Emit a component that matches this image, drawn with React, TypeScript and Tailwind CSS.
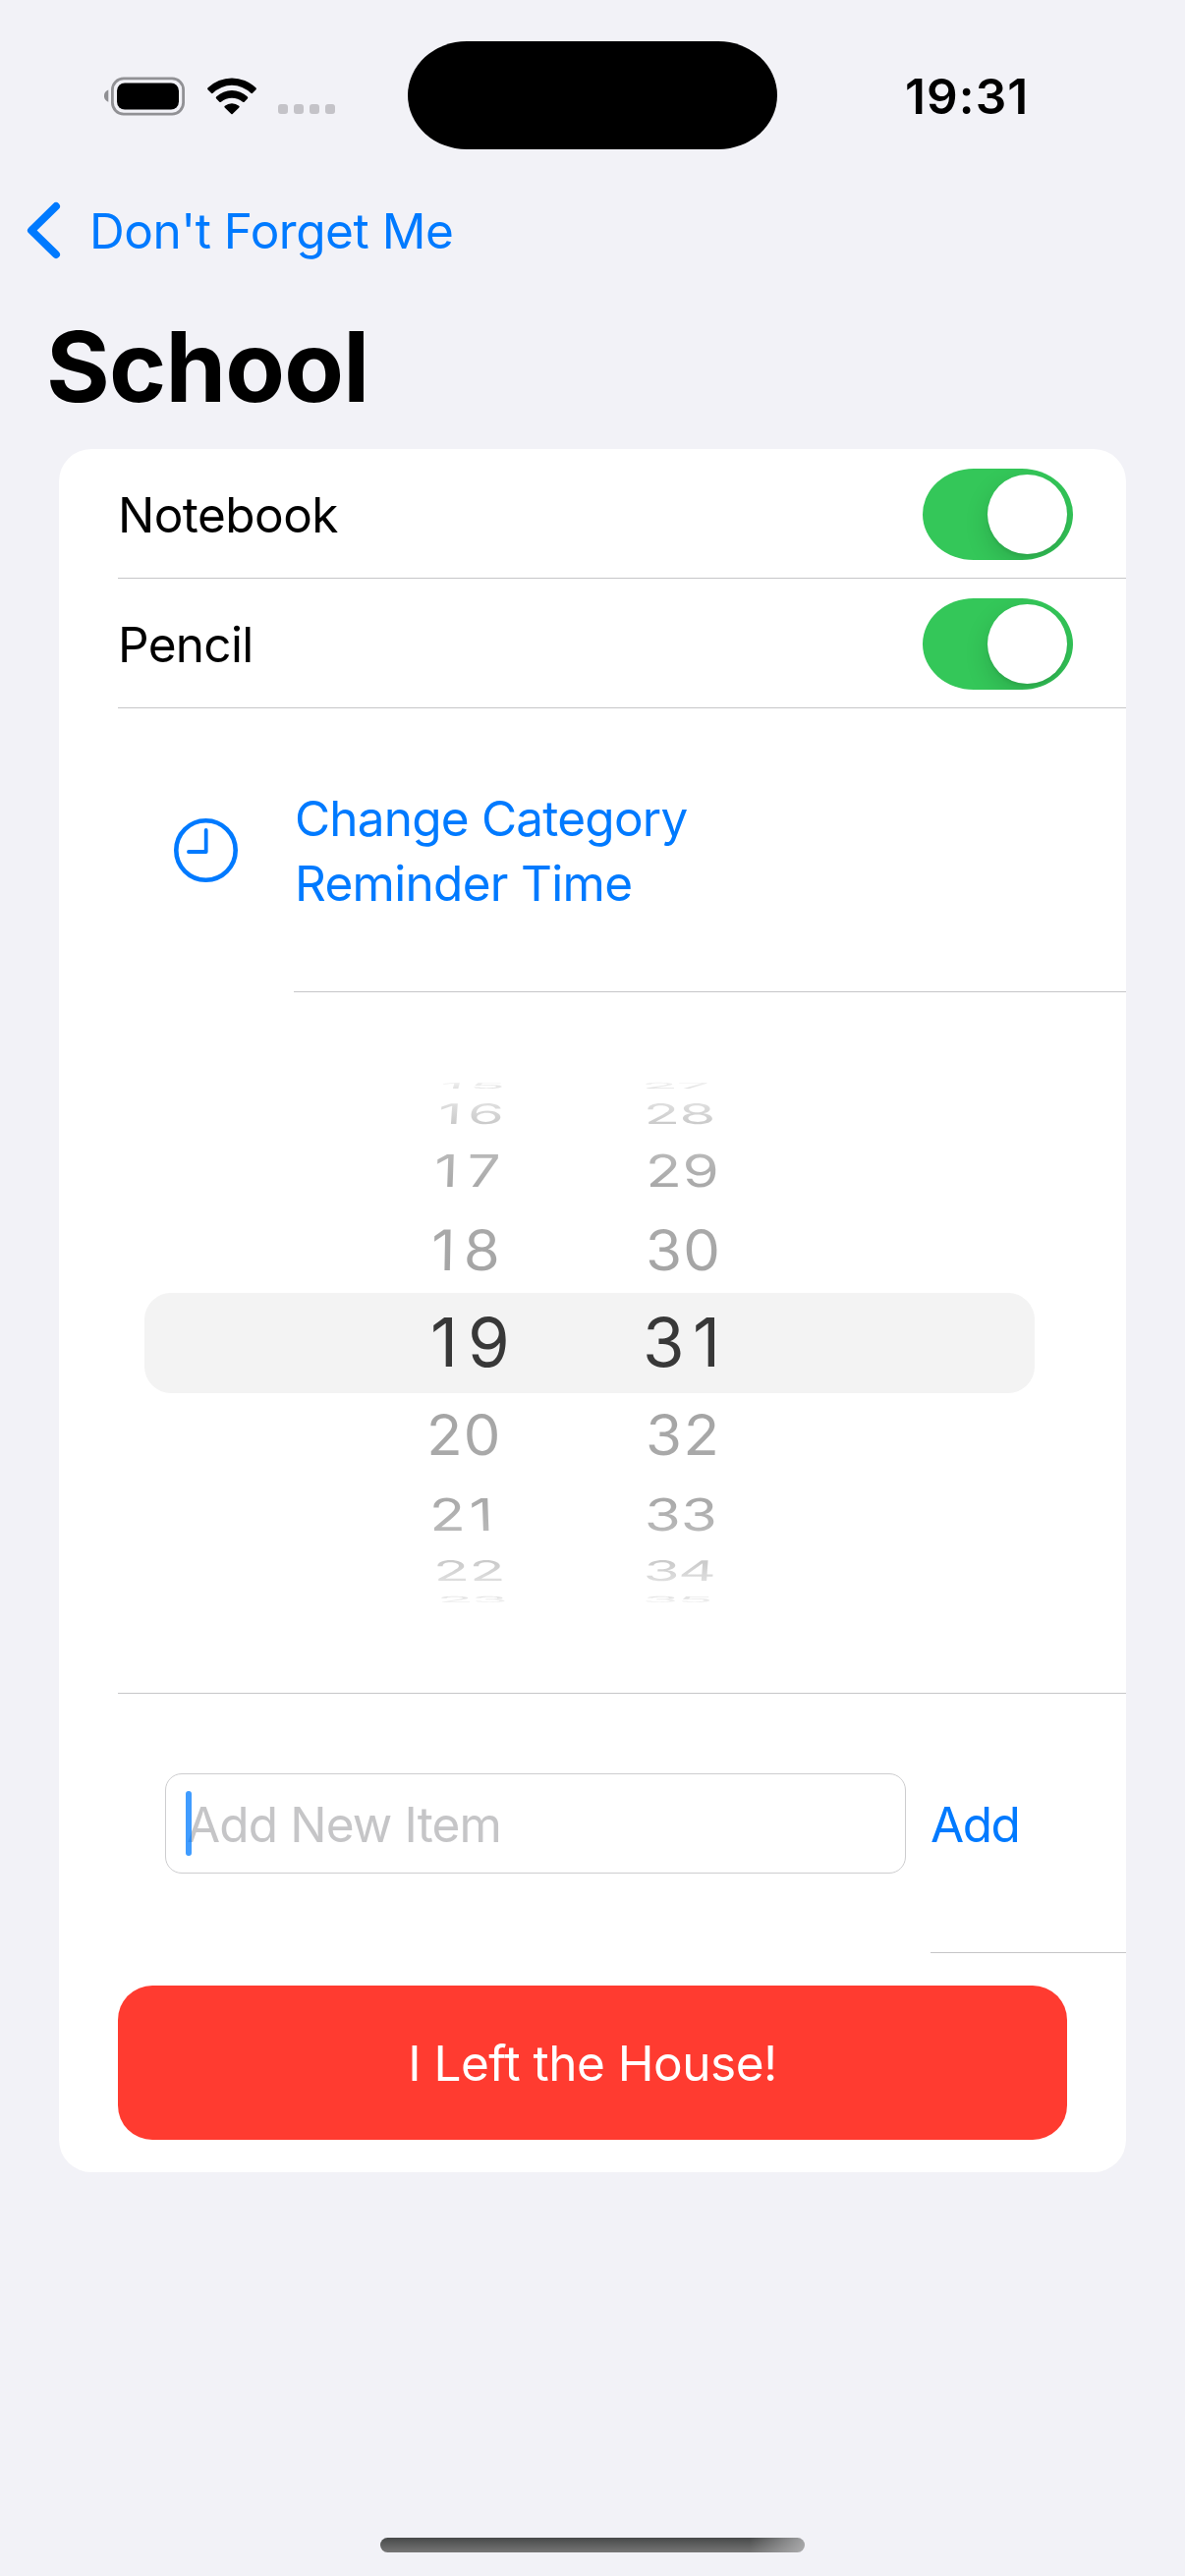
import React from "react";

type Digit = { text: string; x: number; gap: number };
type WheelRow = {
  height: number;
  size: number;
  scale: number;
  skew: number;
  shift: number;
  top: string;
  bottom: string;
  hour: Digit;
  minute: Digit;
};

// x is the offset of each numeral inside the wheel, gap is its letter spacing.
const wheel: WheelRow[] = [
  { height: 12, size: 60, scale: 0.14, skew: 14, shift: 0, top: "#f0f0f0", bottom: "#e0e0e0", hour: { text: "15", x: 301, gap: 5.5 }, minute: { text: "27", x: 506, gap: -0.5 } },
  { height: 46, size: 60, scale: 0.475, skew: 4, shift: 0, top: "#dedede", bottom: "#cacaca", hour: { text: "16", x: 299, gap: 5.5 }, minute: { text: "28", x: 508, gap: -0.5 } },
  { height: 70, size: 60, scale: 0.755, skew: 2, shift: -1, top: "#b8b8b8", bottom: "#a9a9a9", hour: { text: "17", x: 295, gap: 9 }, minute: { text: "29", x: 510, gap: 1 } },
  { height: 89, size: 60, scale: 0.95, skew: 1, shift: 0, top: "#a9a9a9", bottom: "#a5a5a5", hour: { text: "18", x: 292, gap: 8.5 }, minute: { text: "30", x: 510, gap: 1 } },
  { height: 102, size: 69, scale: 1, skew: 0, shift: -1, top: "#383838", bottom: "#383838", hour: { text: "19", x: 291, gap: 10 }, minute: { text: "31", x: 507, gap: 8.4 } },
  { height: 86, size: 60, scale: 0.95, skew: -1, shift: -1, top: "#a5a5a5", bottom: "#a9a9a9", hour: { text: "20", x: 287, gap: 1 }, minute: { text: "32", x: 510, gap: 1.5 } },
  { height: 76, size: 60, scale: 0.755, skew: -2, shift: -1, top: "#a9a9a9", bottom: "#b8b8b8", hour: { text: "21", x: 290, gap: 4 }, minute: { text: "33", x: 509, gap: 0 } },
  { height: 38, size: 60, scale: 0.475, skew: -4, shift: 0, top: "#cacaca", bottom: "#dedede", hour: { text: "22", x: 294, gap: 0 }, minute: { text: "34", x: 508, gap: -1.5 } },
  { height: 20, size: 60, scale: 0.14, skew: -14, shift: 0, top: "#e0e0e0", bottom: "#f0f0f0", hour: { text: "23", x: 298, gap: -1.5 }, minute: { text: "35", x: 507, gap: -1.5 } },
];

function Numeral({ row, digit, side }: { row: WheelRow; digit: Digit; side: number }) {
  return (
    <span
      className="col-start-1 row-start-1 w-max origin-center bg-clip-text leading-none whitespace-nowrap text-transparent"
      style={{
        marginLeft: digit.x,
        fontSize: row.size,
        letterSpacing: digit.gap,
        backgroundImage: `linear-gradient(${row.top} 15%, ${row.bottom} 85%)`,
        transform: `translateY(${row.shift}px) skewX(${row.skew * side}deg) scaleY(${row.scale})`,
      }}
    >
      {digit.text}
    </span>
  );
}

function Toggle() {
  return (
    <div className="flex h-[93px] w-[153px] items-center justify-end overflow-hidden rounded-[52px/46.5px] bg-[#34c759] pr-1.5">
      <div className="size-[81px] rounded-full bg-white shadow-[0_9px_24px_rgba(0,0,0,0.15),0_3px_3px_rgba(0,0,0,0.06)]" />
    </div>
  );
}

function ItemRow({ children }: { children: React.ReactNode }) {
  return (
    <div className="ml-15 flex h-33 items-center justify-between border-b border-[#c6c6c8] pt-0.5 pr-[54px]">
      {children}
      <Toggle />
    </div>
  );
}

export default function App() {
  return (
    <div className="flex h-[2622px] w-[1206px] flex-col overflow-hidden bg-[#f2f2f7] font-['Inter',sans-serif] text-[49.5px] leading-[60px] text-black">
      <header className="flex h-[196px] items-center">
        <svg className="ml-[106px] h-10 w-[82px]" viewBox="106 77.5 82 40">
          <path d="M110.3 91v12.2c-2.6-.9-4.4-3.2-4.4-6.1s1.800-5.200 4.400-6.100Z" fill="#8f8f93" />
          <rect x="114.400" y="79.400" width="72.200" height="36.200" rx="11.500" fill="none" stroke="#919195" strokeWidth="2.800" />
          <rect x="119" y="84" width="63" height="27" rx="8" fill="#000" />
        </svg>
        <svg className="ml-[22px] h-10 w-[52px]" viewBox="329 22.500 156 120">
          <path d="M334 56.500Q331 59.500 333.500 62L344 73Q346.500 75 349 73A82 82 0 0 1 465 73Q467.500 75 470 73L480.500 62Q483 59.500 480 56.500A105 105 0 0 0 334 56.500Z" />
          <path d="M360 83.500Q356.500 86.500 359 89L369 99.500Q371.500 101.500 374 99.500A52 52 0 0 1 440 99.500Q442.500 101.500 445 99.500L455 89Q457.500 86.500 454 83.500A68 68 0 0 0 360 83.500Z" />
          <path d="M385.500 112Q382.500 114.500 385 117L405 136.500Q407 138.500 409 136.500L429 117Q431.500 114.500 428.500 112A34 34 0 0 0 385.500 112Z" />
        </svg>
        <div className="mt-[26px] ml-[21px] flex gap-1.5">
          <i className="size-2.5 rounded-[3px] bg-[#c4c3c8]" />
          <i className="size-2.5 rounded-[3px] bg-[#c4c3c8]" />
          <i className="size-2.5 rounded-[3px] bg-[#c4c3c8]" />
          <i className="size-2.5 rounded-[3px] bg-[#c4c3c8]" />
        </div>
        <div className="-mt-0.5 ml-[74px] h-[110px] w-[376px] rounded-[60px/55px] bg-black" />
        <time className="ml-[130px] font-semibold tracking-[1.100px]">19:31</time>
      </header>

      <nav className="flex h-[78px] items-center text-[#007aff]">
        <svg className="ml-[26px] h-[60px] w-9" viewBox="0 0 36 60" fill="none" stroke="currentColor" strokeWidth="8" strokeLinecap="round" strokeLinejoin="round">
          <path d="M31 5 6 29.500 31 54" />
        </svg>
        <span className="ml-[29px] tracking-[-0.460px]">Don't Forget Me</span>
      </nav>

      <h1 className="mt-[39px] ml-[47px] text-[99px] leading-[120px] font-bold tracking-[-0.800px]">School</h1>

      <main className="mt-6 ml-15 flex h-[1754px] w-[1086px] flex-col rounded-[33px] bg-white">
        <ItemRow>
          <span className="tracking-[-0.550px]">Notebook</span>
        </ItemRow>
        <ItemRow>
          <span className="tracking-[-0.700px]">Pencil</span>
        </ItemRow>

        <section className="flex h-[289px] items-stretch text-[#007aff]">
          <div className="flex w-[239px] items-center pl-[117px]">
            <svg className="size-[65px]" viewBox="0 0 65 65" fill="none" stroke="currentColor" strokeLinecap="round" strokeLinejoin="round">
              <circle cx="32.500" cy="32.500" r="30.200" strokeWidth="4.600" />
              <path d="M32.700 12V34H15" strokeWidth="3.800" />
            </svg>
          </div>
          <div className="flex flex-1 flex-col justify-center border-b border-[#c6c6c8] pt-0.5 leading-[66px]">
            <span className="pl-px tracking-[-0.800px]">Change Category</span>
            <span className="pl-px tracking-[-0.700px]">Reminder Time</span>
          </div>
        </section>

        <section className="ml-15 h-[714px] border-b border-[#c6c6c8] pt-[89px]">
          <div className="-ml-15">
            {wheel.map((row) => (
              <div
                key={row.hour.text}
                className={row.skew === 0 ? "ml-[87px] w-[906px] rounded-[27px] bg-[#f3f3f3]" : "ml-[87px] w-[906px]"}
              >
                <div className="grid items-center" style={{ height: row.height, gridTemplateRows: `${row.height}px` }}>
                  <Numeral row={row} digit={row.hour} side={-1} />
                  <Numeral row={row} digit={row.minute} side={1} />
                </div>
              </div>
            ))}
          </div>
        </section>

        <section className="flex h-66 pl-[108px]">
          <div className="flex items-center">
            <div className="relative flex h-[102px] w-[754px] items-center rounded-[17px] border border-[#cdcdcf] pt-0.5 pl-[21px] text-[#c5c5c7]">
              <span className="tracking-[-0.850px]">Add New Item</span>
              <span className="absolute top-[17px] left-5 h-[66px] w-1.5 rounded-full bg-[#007aff]/75" />
            </div>
          </div>
          <div className="ml-[25px] flex flex-1 items-center border-b border-[#c6c6c8] pt-0.5">
            <span className="tracking-[-1.500px] text-[#007aff]">Add</span>
          </div>
        </section>

        <button className="mx-15 mt-[33px] flex h-[157px] items-center justify-center rounded-[35px] bg-[#ff3b30] tracking-[-0.500px] text-white">
          I Left the House!
        </button>
      </main>

      <div className="mx-auto mt-auto mb-6 h-[15px] w-[432px] rounded-full bg-[linear-gradient(to_right,transparent_87%,rgba(190,190,192,0.75)),linear-gradient(#474949,#767676)]" />
    </div>
  );
}
